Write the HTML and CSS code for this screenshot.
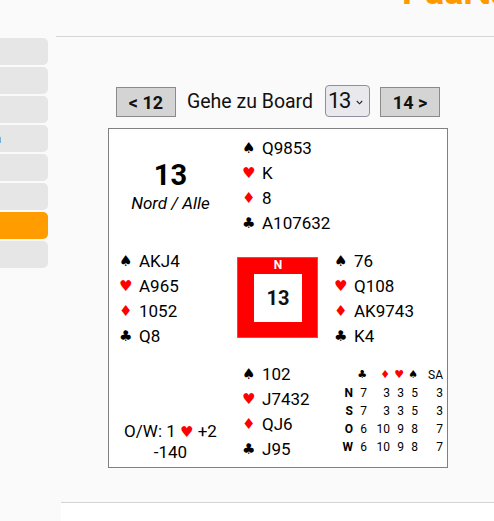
FILE: index.html
```html
<!DOCTYPE html>
<html lang="de">
<head>
<meta charset="utf-8">
<title>Board 13</title>
<link rel="stylesheet" href="styles.css">
</head>
<body>
<header class="top">
  <h1 class="title">Paarturnier</h1>
</header>
<div class="layout">
  <nav class="sidebar">
    <a class="side-item"></a>
    <a class="side-item"></a>
    <a class="side-item"></a>
    <a class="side-item"><span class="clip">n</span></a>
    <a class="side-item"></a>
    <a class="side-item"></a>
    <a class="side-item active"></a>
    <a class="side-item"></a>
  </nav>
  <main class="main">
    <div class="content">
      <div class="boardnav">
        <button class="navbtn">&lt; 12</button>
        <span class="goto">Gehe zu Board</span>
        <div class="select"><span class="select-val">13</span><svg class="chev" width="7" height="5" viewBox="0 0 7 5"><path d="M0.8 1 L3.5 3.8 L6.2 1" fill="none" stroke="#222" stroke-width="1.1"/></svg></div>
        <button class="navbtn">14 &gt;</button>
      </div>
      <div class="board">
        <div class="cell info">
          <div class="bnum">13</div>
          <div class="dealer">Nord / Alle</div>
        </div>
        <div class="cell hand">
          <div><span class="suit">♠</span>Q9853</div>
          <div><span class="suit red">♥</span>K</div>
          <div><span class="suit red">♦</span>8</div>
          <div><span class="suit">♣</span>A107632</div>
        </div>
        <div class="cell"></div>
        <div class="cell hand">
          <div><span class="suit">♠</span>AKJ4</div>
          <div><span class="suit red">♥</span>A965</div>
          <div><span class="suit red">♦</span>1052</div>
          <div><span class="suit">♣</span>Q8</div>
        </div>
        <div class="cell center">
          <div class="compass">
            <div class="compass-n">N</div>
            <div class="compass-num">13</div>
          </div>
        </div>
        <div class="cell hand east">
          <div><span class="suit">♠</span>76</div>
          <div><span class="suit red">♥</span>Q108</div>
          <div><span class="suit red">♦</span>AK9743</div>
          <div><span class="suit">♣</span>K4</div>
        </div>
        <div class="cell result">
          <div>O/W: 1 <span class="rsuit red">♥</span> +2</div>
          <div>-140</div>
        </div>
        <div class="cell hand">
          <div><span class="suit">♠</span>102</div>
          <div><span class="suit red">♥</span>J7432</div>
          <div><span class="suit red">♦</span>QJ6</div>
          <div><span class="suit">♣</span>J95</div>
        </div>
        <div class="cell dd">
          <div class="ddgrid">
            <span></span><span class="ds">♣</span><span class="ds red">♦</span><span class="ds red">♥</span><span class="ds">♠</span><span>SA</span>
            <b>N</b><span>7</span><span>3</span><span>3</span><span>5</span><span>3</span>
            <b>S</b><span>7</span><span>3</span><span>3</span><span>5</span><span>3</span>
            <b>O</b><span>6</span><span>10</span><span>9</span><span>8</span><span>7</span>
            <b>W</b><span>6</span><span>10</span><span>9</span><span>8</span><span>7</span>
          </div>
        </div>
      </div>
    </div>
    <footer class="footer"></footer>
  </main>
</div>
</body>
</html>
```

FILE: styles.css
```css
html, body {
  margin: 0;
  padding: 0;
}
body {
  background: #fafafa;
  font-family: Roboto, "Liberation Sans", sans-serif;
  color: #000;
  overflow: hidden;
  height: 521px;
}
.top {
  height: 36px;
  overflow: hidden;
}
.title {
  margin: -26px 0 0 0;
  padding-left: 402px;
  font-size: 36px;
  line-height: 36px;
  font-weight: 700;
  color: #ff9900;
  white-space: nowrap;
}
.layout {
  display: flex;
  align-items: stretch;
  height: 485px;
}
.sidebar {
  width: 48px;
  flex: none;
  padding-top: 2px;
  display: flex;
  flex-direction: column;
  gap: 2px;
}
.side-item {
  display: block;
  height: 27px;
  background: #e6e6e6;
  border-radius: 0 5px 5px 0;
  overflow: hidden;
  font-size: 13px;
  line-height: 27px;
  color: #444;
  text-decoration: none;
}
.side-item.active {
  background: #ff9c00;
}
.clip {
  display: inline-block;
  margin-left: -6px;
  color: #444;
}
.main {
  flex: 1;
  margin-left: 8px;
  border-top: 1px solid #d4d4d4;
  display: flex;
  flex-direction: column;
}
.content {
  padding: 48px 0 0 6px;
  display: flex;
  flex-direction: column;
  align-items: center;
}
.boardnav {
  display: flex;
  align-items: flex-end;
  height: 32px;
}
.navbtn {
  width: 60px;
  height: 30px;
  padding: 0;
  background: #d4d4d4;
  border: 1px solid #8a8a8a;
  border-radius: 0;
  font-family: Roboto, "Liberation Sans", sans-serif;
  font-weight: 700;
  font-size: 18px;
  color: #111;
}
.goto {
  margin: 0 12px 0 11px;
  font-size: 19.5px;
  line-height: 30px;
  color: #111;
}
.select {
  width: 45px;
  height: 32px;
  box-sizing: border-box;
  border: 1px solid #8f8f9d;
  border-radius: 4px;
  background: #e9e9ed;
  display: flex;
  align-items: center;
  padding-left: 2px;
  margin-right: 10px;
}
.select-val {
  font-size: 22px;
  font-weight: 400;
  letter-spacing: -1.5px;
  color: #111;
  line-height: 30px;
}
.chev {
  margin-left: 6px;
  margin-top: 2px;
}
.board {
  margin-top: 11px;
  width: 338px;
  height: 338px;
  border: 1px solid #808080;
  background: #fff;
  display: grid;
  grid-template-columns: 123px 91px 124px;
  grid-template-rows: repeat(3, 1fr);
}
.cell {
  min-width: 0;
}
.info {
  display: flex;
  flex-direction: column;
  align-items: center;
  justify-content: center;
  padding-top: 2px;
}
.bnum {
  font-size: 29px;
  font-weight: 700;
  line-height: 34px;
}
.dealer {
  font-size: 17px;
  font-style: italic;
  line-height: 22px;
}
.hand {
  display: flex;
  flex-direction: column;
  justify-content: center;
  padding-left: 10px;
  padding-top: 2px;
  font-size: 17px;
  white-space: nowrap;
}
.hand > div {
  height: 25px;
  line-height: 25px;
}
.hand.east {
  padding-left: 11px;
}
.suit {
  display: inline-block;
  width: 20px;
  font-family: "DejaVu Sans", sans-serif;
  font-size: 15px;
  line-height: 20px;
  vertical-align: top;
  margin-top: 2px;
}
.red {
  color: #ff0000;
}
.center {
  display: flex;
  align-items: center;
  justify-content: center;
}
.compass {
  width: 81px;
  height: 81px;
  box-sizing: border-box;
  border: 1px solid #777;
  background: #ff0000;
  padding: 0 15px 15px 16px;
  display: grid;
  grid-template-rows: 16px 48px;
}
.compass-n {
  color: #fff;
  font-weight: 700;
  font-size: 12px;
  line-height: 14px;
  text-align: center;
}
.compass-num {
  background: #fff;
  display: flex;
  align-items: center;
  justify-content: center;
  font-size: 20px;
  font-weight: 700;
  color: #111;
}
.result {
  display: flex;
  flex-direction: column;
  justify-content: flex-end;
  align-items: center;
  padding-bottom: 4px;
  font-size: 17px;
  line-height: 21px;
}
.rsuit {
  font-family: "DejaVu Sans", sans-serif;
  font-size: 15px;
  line-height: 15px;
}
.dd {
  display: flex;
  align-items: center;
  justify-content: flex-end;
  padding-right: 4px;
}
.ddgrid {
  display: grid;
  grid-template-columns: 14px 14px 23px 14px 14px 25px;
  justify-items: end;
  font-size: 12px;
  line-height: 18px;
}
.ddgrid b {
  font-weight: 700;
}
.ds {
  font-family: "DejaVu Sans", sans-serif;
  font-size: 11px;
}
.footer {
  margin-top: 34px;
  margin-left: 5px;
  border-top: 1px solid #d4d4d4;
  background: #fff;
  flex: 1;
}
```
